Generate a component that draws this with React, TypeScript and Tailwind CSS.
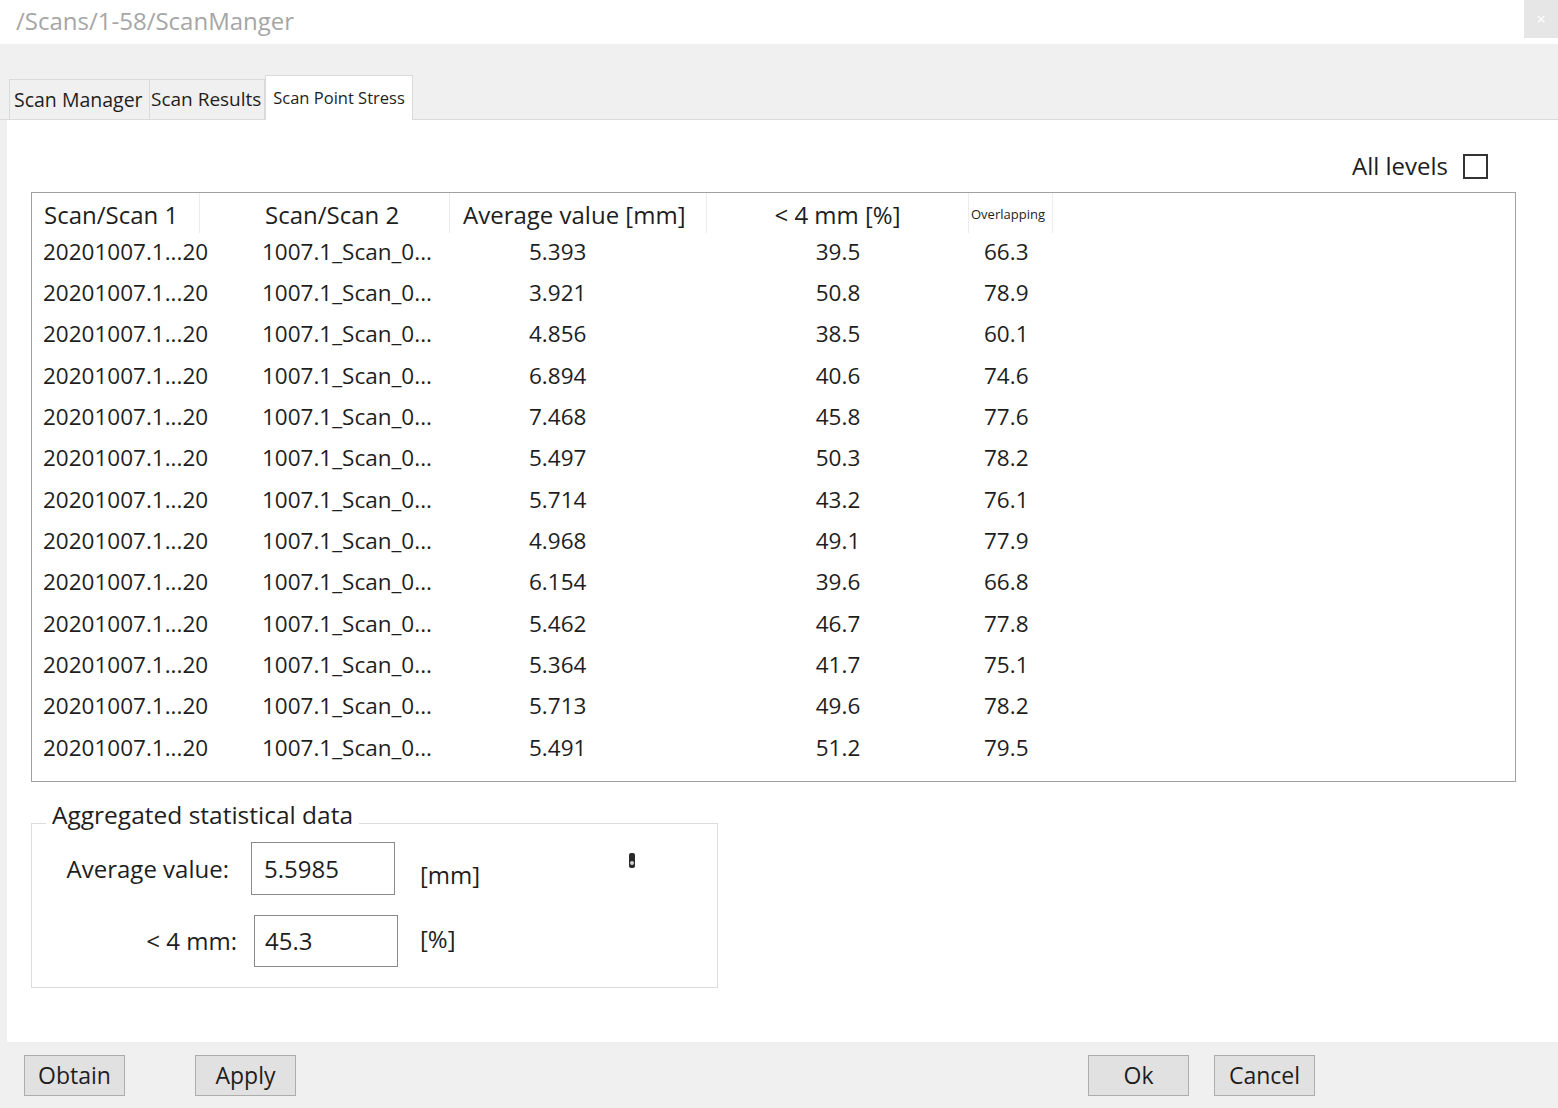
const rows: [string, string, string][] = [
  ["5.393", "39.5", "66.3"],
  ["3.921", "50.8", "78.9"],
  ["4.856", "38.5", "60.1"],
  ["6.894", "40.6", "74.6"],
  ["7.468", "45.8", "77.6"],
  ["5.497", "50.3", "78.2"],
  ["5.714", "43.2", "76.1"],
  ["4.968", "49.1", "77.9"],
  ["6.154", "39.6", "66.8"],
  ["5.462", "46.7", "77.8"],
  ["5.364", "41.7", "75.1"],
  ["5.713", "49.6", "78.2"],
  ["5.491", "51.2", "79.5"],
];

const Button = ({ label }: { label: string }) => (
  <button className="w-[101px] h-[41px] bg-[#e1e1e1] border border-[#adadad] text-[23px] text-[#1e1e1e] leading-none">
    {label}
  </button>
);

const headCell = "h-full pt-[4px] flex items-center border-r border-[#ececec]";

export default function App() {
  return (
    <div
      className="w-[1558px] h-[1108px] flex flex-col bg-[#f0f0f0] text-[#1e1e1e] overflow-hidden"
      style={{ fontFamily: '"Open Sans", "Noto Sans", sans-serif' }}
    >
      {/* title bar */}
      <div className="h-[44px] bg-white flex justify-between">
        <span className="pl-[16px] pt-[3px] text-[24px] text-[#a6a6a6]">/Scans/1-58/ScanManger</span>
        <div className="w-[34px] h-[38px] bg-[#e6e6e6] flex items-center justify-center text-white text-[16px]">
          ×
        </div>
      </div>

      {/* tabs */}
      <div className="h-[76px] flex items-end pl-[9px] border-b border-[#dadada] whitespace-nowrap">
        <div className="w-[141px] h-[40px] pl-[4px] flex items-center border border-b-0 border-[#dadada] text-[19.5px]">
          Scan Manager
        </div>
        <div className="w-[115px] h-[40px] pl-[1px] flex items-center border-t border-r border-[#dadada] text-[19px]">
          Scan Results
        </div>
        <div className="w-[148px] h-[45px] -mb-px bg-white flex items-center justify-center border border-b-0 border-[#dadada] text-[16.5px]">
          Scan Point Stress
        </div>
      </div>

      {/* content */}
      <div className="flex-1 ml-[7px] bg-white flex flex-col">
        <div className="flex justify-end items-center pt-[28px] pr-[70px] gap-[15px]">
          <span className="text-[24px]">All levels</span>
          <span className="w-[25px] h-[25px] border-2 border-[#333]" />
        </div>

        <div className="mt-[8px] ml-[24px] mr-[42px] h-[590px] border border-[#a0a0a0]">
          <div className="flex h-[40px] text-[24px]">
            <div className={`w-[168px] pl-[12px] ${headCell}`}>Scan/Scan 1</div>
            <div className={`w-[250px] pl-[65px] ${headCell}`}>Scan/Scan 2</div>
            <div className={`w-[257px] pl-[13px] ${headCell}`}>Average value [mm]</div>
            <div className={`w-[262px] justify-center ${headCell}`}>&lt; 4 mm [%]</div>
            <div className={`w-[84px] pl-[2px] text-[13px] ${headCell}`}>Overlapping</div>
          </div>
          {rows.map((r, i) => (
            <div
              key={i}
              className={i === 0 ? "flex h-[41.33px] items-center text-[22.5px] -mt-[2px]" : "flex h-[41.33px] items-center text-[22.5px]"}
            >
              <div className="w-[168px] pl-[11px]">20201007.1...20</div>
              <div className="w-[250px] pl-[62px]">1007.1_Scan_0...</div>
              <div className="w-[257px] pl-[79px]">{r[0]}</div>
              <div className="w-[262px] text-center">{r[1]}</div>
              <div className="w-[84px] pl-[15px]">{r[2]}</div>
            </div>
          ))}
        </div>

        <fieldset className="relative mt-[16px] ml-[24px] w-[687px] h-[190px] border border-[#dcdcdc]">
          <legend className="ml-[14px] px-[6px] pb-[16px] text-[24.5px] leading-[34px]">Aggregated statistical data</legend>
          <div className="flex items-center -mt-[6px]">
            <span className="w-[197px] text-right text-[24px]">Average value:</span>
            <div className="ml-[22px] w-[144px] h-[53px] border border-[#8a8a8a] flex items-center pl-[12px] text-[24px]">
              5.5985
            </div>
            <span className="ml-[25px] mt-[12px] text-[24px]">[mm]</span>
          </div>
          <div className="flex items-center mt-[20px]">
            <span className="w-[205px] text-right text-[24px]">&lt; 4 mm:</span>
            <div className="ml-[17px] w-[144px] h-[52px] border border-[#8a8a8a] flex items-center pl-[10px] text-[24px]">
              45.3
            </div>
            <span className="ml-[22px] mt-[-4px] text-[24px]">[%]</span>
          </div>
          <svg className="absolute left-[595px] top-[4px]" width="10" height="18" viewBox="0 0 10 18">
            <rect x="2" y="1" width="6" height="15" rx="2" fill="#2a2a2a" />
            <circle cx="5" cy="11" r="2" fill="#d0d0d0" />
          </svg>
        </fieldset>
      </div>

      {/* bottom bar */}
      <div className="h-[66px] flex items-center pl-[24px] pr-[243px]">
        <Button label="Obtain" />
        <div className="ml-[70px]">
          <Button label="Apply" />
        </div>
        <div className="flex-1" />
        <Button label="Ok" />
        <div className="ml-[25px]">
          <Button label="Cancel" />
        </div>
      </div>
    </div>
  );
}
